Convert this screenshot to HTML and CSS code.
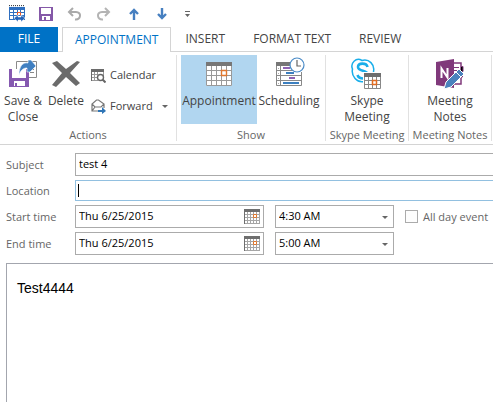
FILE: index.html
```html
<!DOCTYPE html>
<html lang="en">
<head>
<meta charset="utf-8">
<title>test 4 - Appointment</title>
<link rel="stylesheet" href="styles.css">
</head>
<body>
<svg width="0" height="0" class="defs" aria-hidden="true">
  <symbol id="cal" viewBox="0 0 16 15">
    <path fill="#fff" d="M0 0h16v15H0z"/>
    <path fill="#6e6e6e" d="M0 0h16v3H0zM0 3h1v12H0z"/>
    <path fill="#a6a6a6" d="M15 3h1v12h-1zM3 3h1v12H3zM6 3h1v12H6zM9 3h1v12H9zM12 3h1v12h-1zM1 5h14v1H1zM1 8h14v1H1zM1 11h14v1H1zM1 14h15v1H1z"/>
    <path fill="#fff" stroke="#e0782f" d="M9.500 5.500h3v3h-3z"/>
  </symbol>
</svg>

<header class="quick">
  <button aria-label="Calendar item"><svg width="16" height="17" viewBox="0 0 16 17"><path fill="#2f6fc0" d="M0 2h16v13H0z"/><path fill="#fff" d="M1 5h3v2H1zM5 5h3v2H5zM9 5h2v2H9zM12 5h3v2h-3zM1 8h3v2H1zM5 8h3v2H5zM9 8h2v2H9zM12 8h3v2h-3zM1 11h3v3H1zM5 11h3v2H5zM9 11h5v2H9z"/><path stroke="#444" stroke-dasharray="1 1" d="M0 .5h16"/><path stroke="#d5dfec" stroke-dasharray="1 1" d="M0 1.500h16"/><path fill="none" stroke="#f05a28" d="M8.500 10V7.500h3v3"/><path fill="#2463b8" stroke="#fff" stroke-width=".5" d="M5 13l4-3v2h3v-2l4 3-4 4v-2H9v2z"/></svg></button>
  <button aria-label="Save"><svg width="14" height="14" viewBox="0 0 14 14"><path fill="#8559a8" fill-rule="evenodd" d="M0 0h14v14H0zM2 1v6h10V1zM3 9v4h2v-3h2v3h4V9z"/></svg></button>
  <button aria-label="Undo"><svg width="15" height="14" viewBox="0 0 15 14"><path fill="none" stroke="#aaa" stroke-width="2" d="M6 1L2 5l4 4M2 5h7c6 0 5 8-1 7.500"/></svg></button>
  <button aria-label="Redo"><svg width="15" height="14" viewBox="0 0 15 14"><path fill="none" stroke="#b4b4b4" stroke-width="2" d="M9 1l4 4-4 4M13 5H6C0 5 1 13 7 12.500"/></svg></button>
  <button aria-label="Previous item"><svg width="10" height="12" viewBox="0 0 10 12"><path fill="none" stroke="#467fc0" stroke-width="2.400" d="M5 12V2M1 6l4-4 4 4"/></svg></button>
  <button aria-label="Next item"><svg width="10" height="12" viewBox="0 0 10 12"><path fill="none" stroke="#467fc0" stroke-width="2.400" d="M5 0v10M1 6l4 4 4-4"/></svg></button>
  <button aria-label="Customize toolbar"><svg width="5" height="6" viewBox="0 0 5 6"><path fill="#666" d="M0 0h5v1H0zM0 3h5L2.500 6z"/></svg></button>
</header>

<nav class="tabs">
  <a class="file" href="#file">FILE</a>
  <a class="current" href="#appointment">APPOINTMENT</a>
  <a href="#insert">INSERT</a>
  <a href="#format">FORMAT TEXT</a>
  <a href="#review">REVIEW</a>
</nav>

<section class="ribbon">
  <div class="group actions">
    <div class="tools">
      <button class="big save"><svg width="32" height="32" viewBox="0 0 32 32"><path fill="#fff" stroke="#8a8a8a" d="M9.500 4.500h20v16h-20z"/><path stroke="#888" d="M23 9.500h4M23 12.500h4M23 15.500h4"/><path fill="#8559b0" d="M2 12h20v18H2z"/><path fill="#fff" d="M5 12h14v9H5zM7 24h11v5h-8v-3H8v3H7z"/><path fill="#3f7fc1" stroke="#fff" stroke-width=".6" d="M12 18C12 9 16 5 21 6V3h3l5 6-6 6h-3v-4c-4 0-6 2-8 7z"/></svg><span>Save &amp;<br>Close</span></button>
      <button class="big delete"><svg width="32" height="32" viewBox="0 0 32 32"><path fill="#6b6b6b" d="M2 6l5-2 9 8L27 4l3 1-10 11 10 10-4 3-10-9-10 10-4-2 10-12z"/></svg><span>Delete</span></button>
      <div class="stack">
        <button class="small"><svg width="15" height="15" viewBox="0 0 15 15"><path fill="#6b6b6b" d="M0 1h13v3H0zM0 4h1v9H0z"/><path fill="#999" d="M12 4h1v4h-1zM3 4h1v9H3zM6 4h1v3H6zM1 6h6v1H1zM1 9h5v1H1zM1 12h6v1H1z"/><circle cx="9.500" cy="9.500" r="3" fill="#fff" stroke="#666" stroke-width="1.400"/><path stroke="#666" stroke-width="2" d="M11.500 11.500l3 3"/></svg>Calendar</button>
        <button class="small"><svg width="15" height="15" viewBox="0 0 15 15"><path fill="#fff" stroke="#777" stroke-width="1.200" d="M8 12H1V5l4.500-4h2L13 5v4M1 5l3 3h6l3-3M1 12l3-4"/><path fill="#2e75b6" d="M7 11h4V8l4 4-4 3v-2H7z"/></svg>Forward<i class="arrow"></i></button>
      </div>
    </div>
    <h2>Actions</h2>
  </div>
  <div class="group show">
    <div class="tools">
      <button class="big selected"><svg width="32" height="32" viewBox="0 0 32 32"><path fill="#fff" d="M3 5h26v24H3z"/><path fill="#777" d="M3 5h26v4H3z"/><path fill="none" stroke="#999" d="M3.500 9v19.500h25V9M8.500 9v19M13.500 9v19M18.500 9v19M23.500 9v19M3 13.500h26M3 18.500h26M3 23.500h26"/><path fill="#fff" stroke="#e0782f" stroke-width="1.400" d="M18.500 13.500h5v5h-5z"/></svg><span>Appointment</span></button>
      <button class="big sched"><svg width="32" height="32" viewBox="0 0 32 32"><path fill="#fff" stroke="#888" d="M3.500 6v22.500h25V15M7.500 9v19M3 13.500h25M3 18.500h25M3 23.500h25"/><path fill="#777" d="M3 5h16v4H3z"/><path stroke="#aaa" d="M5 11.500h1M5 16.500h1M5 21.500h1M5 26.500h1"/><path stroke="#8f63b5" stroke-width="2" d="M10 11h7M16 21h6"/><path stroke="#3c7fc0" stroke-width="2" d="M13 16h8M10 26h16"/><circle cx="24" cy="8" r="7" fill="#fff" stroke="#4a8bc7" stroke-width="1.200"/><path fill="none" stroke="#666" stroke-width="1.200" d="M24 3v6h4"/></svg><span>Scheduling</span></button>
    </div>
    <h2>Show</h2>
  </div>
  <div class="group single">
    <div class="tools">
      <button class="big"><svg width="32" height="32" viewBox="0 0 32 32"><path fill="#fff" stroke="#19aeea" stroke-width="1.500" d="M1.500 12C-1 6 5 0 11 3.500c7-2 13 4 11.500 11 3 7-3 13-9.500 10C6 26 0 19 1.500 12z"/><path fill="none" stroke="#19aeea" stroke-width="2.600" d="M16.500 10c-1-4.500-9.500-4.500-9.500 0 0 5 10 2.500 10 8 0 5-9 4.500-10.500 0"/><path fill="#fff" d="M12 15h19v17H12z"/><path fill="#6e6e6e" d="M13 16h17v4H13z"/><path fill="none" stroke="#888" d="M13.500 20v11.500h16V20M17.500 20v11M21.500 20v11M25.500 20v11M13 23.500h17M13 27.500h17"/><path fill="#fff" stroke="#e06a1f" stroke-width="1.500" d="M21.500 23.500h4v4h-4z"/></svg><span>Skype<br>Meeting</span></button>
    </div>
    <h2>Skype Meeting</h2>
  </div>
  <div class="group single">
    <div class="tools">
      <button class="big"><svg width="32" height="32" viewBox="0 0 32 32"><path fill="#fff" stroke="#80397b" stroke-width="1.500" d="M17 6h10v21H17"/><path stroke="#80397b" d="M20 10.500h5M20 13.500h5M27 9.500h2v5h-2M28.500 14v6h-2"/><path fill="#80397b" d="M2 5l18-3v29L2 28z"/><path fill="none" stroke="#fff" stroke-width="2" d="M7.500 21V11.500l6 9V11"/><path fill="#4a82bd" stroke="#fff" d="M10 32l2-7 13-13 5 5-13 13z"/><path stroke="#fff" d="M22 15l5 5"/></svg><span>Meeting<br>Notes</span></button>
    </div>
    <h2>Meeting Notes</h2>
  </div>
</section>

<form class="form">
  <label for="subject">Subject</label>
  <input id="subject" class="field wide" type="text" value="test 4">
  <label for="location">Location</label>
  <input id="location" class="field wide focused" type="text">
  <label for="sdate">Start time</label>
  <div class="when">
    <div class="field date"><input id="sdate" type="text" value="Thu 6/25/2015"><button type="button" aria-label="Pick start date"><svg width="16" height="15"><use href="#cal"/></svg></button></div>
    <div class="field time"><select aria-label="Start hour"><option>4:30 AM</option></select><i class="arrow"></i></div>
    <label class="allday"><input type="checkbox">All day event</label>
  </div>
  <label for="edate">End time</label>
  <div class="when">
    <div class="field date"><input id="edate" type="text" value="Thu 6/25/2015"><button type="button" aria-label="Pick end date"><svg width="16" height="15"><use href="#cal"/></svg></button></div>
    <div class="field time"><select aria-label="End hour"><option>5:00 AM</option></select><i class="arrow"></i></div>
  </div>
</form>

<textarea class="message" aria-label="Message">Test4444</textarea>
</body>
</html>
```
FILE: styles.css
```css
* { box-sizing: border-box; }

body {
  margin: 0;
  height: 100vh;
  display: flex;
  flex-direction: column;
  overflow: hidden;
  background: #fff;
  color: #444;
  font: 12px/16px "Open Sans", "Noto Sans", sans-serif;
}

.defs { position: absolute; }

button, input, select, textarea { font: inherit; color: inherit; }

button {
  padding: 0;
  border: 0;
  background: none;
}

svg { display: block; flex: none; }

.quick {
  display: flex;
  align-items: center;
  gap: 14px;
  height: 27px;
  flex: none;
  padding-left: 9px;
}

.quick button:nth-child(n+5) { margin-left: 4px; }

.tabs {
  display: flex;
  flex: none;
  height: 25px;
  line-height: 24px;
  border-bottom: 1px solid #d4d4d4;
}

.tabs a {
  padding: 0 14px;
  color: #444;
  text-decoration: none;
  white-space: nowrap;
}

.tabs .file {
  width: 58px;
  padding: 0;
  height: 25px;
  text-align: center;
  background: #0072c6;
  color: #fff;
}

.tabs .current {
  height: 25px;
  margin-left: 4px;
  padding: 0 12px;
  border: 1px solid #d4d4d4;
  border-bottom: 0;
  background: #fff;
  color: #0072c6;
}

.ribbon {
  display: flex;
  flex: none;
  height: 93px;
  padding: 3px 0;
  border-bottom: 1px solid #d4d4d4;
}

.group {
  display: flex;
  flex-direction: column;
  flex: none;
  border-right: 1px solid #e1e1e1;
}

.actions { width: 177px; }
.show { width: 149px; }
.single { width: 83px; }

.tools {
  display: flex;
  flex: 1;
}

.single .tools { justify-content: center; }
.show .tools { padding-left: 4px; }

.group h2 {
  margin: 0;
  padding-top: 3px;
  font-size: 11px;
  font-weight: 400;
  line-height: 16px;
  text-align: center;
  white-space: nowrap;
  color: #666;
}

.big {
  display: flex;
  flex-direction: column;
  align-items: center;
  height: 69px;
  padding-top: 2px;
  white-space: nowrap;
  line-height: 16px;
}

.big span { margin-top: 4px; }
.save { width: 46px; }
.delete { width: 40px; }
.selected { width: 76px; background: #b1d6f0; }
.sched { width: 64px; }

.stack {
  display: flex;
  flex-direction: column;
  gap: 15px;
  padding: 12px 0 0 5px;
  font-size: 11px;
}

.small {
  display: flex;
  align-items: center;
  gap: 4px;
  height: 16px;
}

.arrow {
  flex: none;
  border: 3px solid transparent;
  border-top-color: #666;
  border-bottom: 0;
}

.small .arrow { margin-left: 5px; }

.form {
  display: grid;
  grid-template-columns: 69px 1fr;
  row-gap: 4px;
  align-items: center;
  flex: none;
  padding: 8px 0 8px 6px;
  color: #666;
  font-size: 11px;
}

.field {
  height: 23px;
  border: 1px solid #ababab;
  background: #fff;
  color: #000;
}

.wide {
  width: 100%;
  padding: 0 3px 2px;
  border-right: 0;
  outline: 0;
}

.focused {
  height: 21px;
  border-color: #92c0e0;
  background: linear-gradient(#000, #000) 2px 3px / 1px 13px no-repeat #fff;
}

.when {
  display: flex;
  align-items: center;
  gap: 11px;
}

.date, .time {
  display: flex;
  align-items: center;
}

.date { width: 189px; padding-right: 3px; }
.time { width: 119px; position: relative; }

.date input, .time select {
  flex: 1;
  min-width: 0;
  height: 21px;
  padding: 0 3px 2px;
  border: 0;
  background: none;
  outline: 0;
  appearance: none;
}

.time .arrow {
  position: absolute;
  right: 5px;
  top: 10px;
  pointer-events: none;
}

.allday {
  display: flex;
  align-items: center;
  gap: 5px;
  white-space: nowrap;
}

.allday input {
  width: 13px;
  height: 13px;
  margin: 0;
  appearance: none;
  border: 1px solid #ababab;
  background: #fdfdfd;
}

.message {
  flex: 1;
  min-height: 0;
  margin-left: 6px;
  padding: 15px 10px;
  border: 1px solid #a3a6ae;
  border-width: 1px 0 0 1px;
  outline: 0;
  resize: none;
  background: #fff;
  color: #000;
  font: 14px/18px "Liberation Sans", Arial, sans-serif;
}
```
